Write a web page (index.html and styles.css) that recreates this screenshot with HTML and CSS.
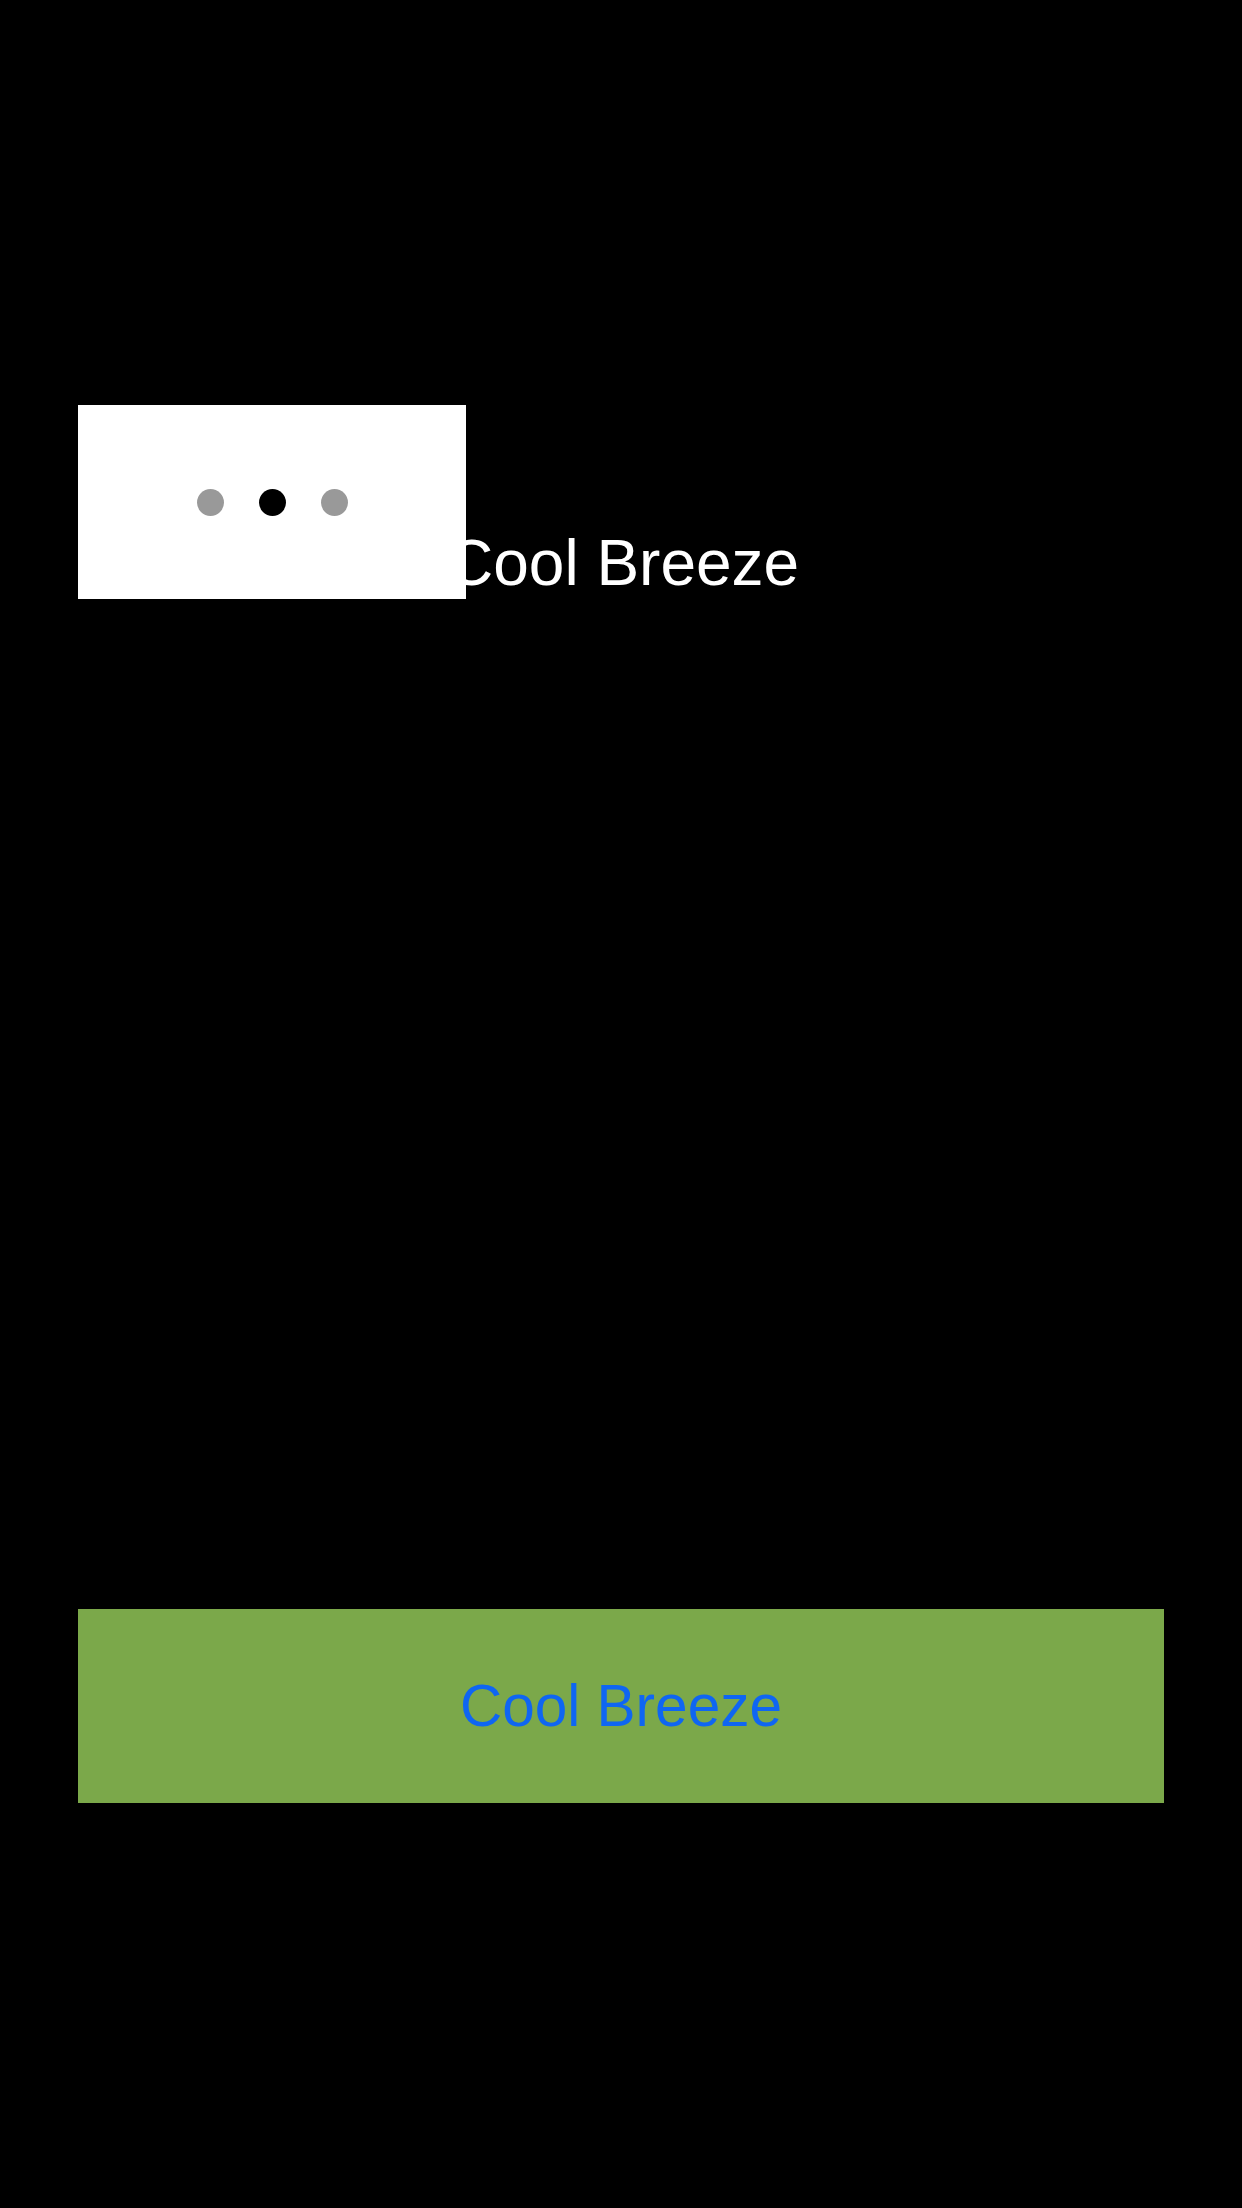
FILE: index.html
```html
<!DOCTYPE html>
<html>
<head>
<meta charset="utf-8">
<link rel="stylesheet" href="styles.css">
</head>
<body>
<div class="page">
  <div class="row">
    <div class="title">Cool Breeze</div>
    <div class="loader">
      <span class="dot dim"></span>
      <span class="dot on"></span>
      <span class="dot dim"></span>
    </div>
  </div>
  <button class="action">Cool Breeze</button>
</div>
</body>
</html>
```
FILE: styles.css
```css
html, body {
  margin: 0;
  padding: 0;
  background: #000;
}
body {
  width: 1242px;
  height: 2208px;
  overflow: hidden;
  font-family: "Liberation Sans", Arial, sans-serif;
}
.page {
  padding: 405px 78px 0 78px;
  display: flex;
  flex-direction: column;
}
.row {
  position: relative;
  height: 194px;
}
.title {
  color: #fff;
  font-size: 64px;
  line-height: 1;
  padding-top: 126px;
  padding-left: 369px;
  white-space: nowrap;
}
.loader {
  position: absolute;
  left: 0;
  top: 0;
  width: 388px;
  height: 194px;
  background: #fff;
  display: flex;
  align-items: center;
  justify-content: center;
  gap: 35px;
}
.dot {
  width: 27px;
  height: 27px;
  border-radius: 50%;
  display: block;
}
.dot.dim { background: #999; }
.dot.on { background: #000; }
.action {
  margin: 1010px 0 0 0;
  height: 194px;
  width: 1086px;
  border: none;
  padding: 0;
  background: #7ba84a;
  color: #0f66f2;
  font-family: "Liberation Sans", Arial, sans-serif;
  font-size: 58.5px;
  line-height: 1;
}
```
